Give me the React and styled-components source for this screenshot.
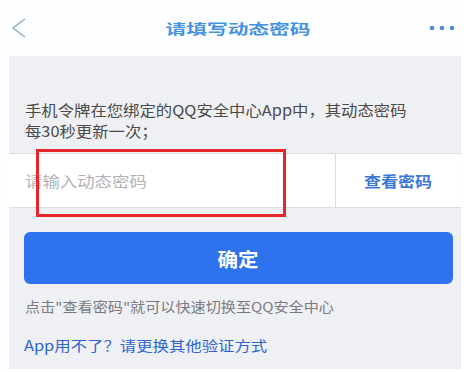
import React from "react";
import styled, { createGlobalStyle } from "styled-components";

const GlobalStyle = createGlobalStyle`
  html, body { margin: 0; padding: 0; background: #fdfeff; }
  body { font-family: "Noto Sans CJK SC", "Noto Sans", sans-serif; }
  * { box-sizing: border-box; }
`;

const Page = styled.div`
  position: relative;
  width: 464px;
  height: 372px;
  display: flex;
  flex-direction: column;
  background: #fdfeff;
  overflow: hidden;
`;

const Header = styled.div`
  height: 56px;
  flex: none;
  display: grid;
  grid-template-columns: 66px 1fr 54px;
  align-items: center;
`;

const BackBtn = styled.div`
  display: flex;
  align-items: center;
  padding-left: 11px;
`;

const MoreBtn = styled.div`
  display: flex;
  justify-content: flex-end;
  padding-right: 9px;
  padding-bottom: 1px;
`;

const Title = styled.div`
  text-align: center;
  font-size: 14px;
  font-weight: 700;
  color: #4392e3;
  line-height: 20px;
`;

const Stretch = styled.span`
  display: inline-block;
  white-space: nowrap;
  transform: scaleX(${(p) => p.$sx || 1});
  transform-origin: ${(p) => p.$origin || "left center"};
`;

const Panel = styled.div`
  flex: 1;
  margin: 0 3px 3px 9px;
  background: #eff0f4;
  display: flex;
  flex-direction: column;
`;

const Desc = styled.div`
  padding: 43px 0 0 16px;
  font-size: 15px;
  line-height: 21px;
  color: #4a4a4a;
`;

const InputRow = styled.div`
  margin-top: 12px;
  height: 55px;
  background: #fff;
  border-top: 1px solid #dcdde2;
  border-bottom: 1px solid #dcdde2;
  display: grid;
  grid-template-columns: 326px 1px 1fr;
  align-items: center;
`;

const Placeholder = styled.div`
  padding-left: 16px;
  font-size: 15px;
  color: #b3b3b8;
`;

const Divider = styled.div`
  align-self: stretch;
  background: #dcdde2;
`;

const ViewLink = styled.div`
  text-align: center;
  font-size: 15px;
  font-weight: 600;
  color: #3b76d9;
`;

const ConfirmButton = styled.div`
  margin: 24px 8px 0 15px;
  height: 52px;
  border-radius: 6px;
  background: #2f72ee;
  display: flex;
  align-items: center;
  justify-content: center;
  color: #fff;
  font-size: 19px;
  font-weight: 700;
`;

const Hint = styled.div`
  margin-top: 12px;
  padding-left: 16px;
  font-size: 13.5px;
  line-height: 20px;
  color: #7a7a80;
`;

const AltLink = styled.div`
  margin-top: 19px;
  padding-left: 15px;
  font-size: 14px;
  line-height: 20px;
  color: #2d66d2;
`;

const Highlight = styled.div`
  position: absolute;
  left: 36px;
  top: 149px;
  width: 250px;
  height: 68px;
  border: 3px solid #e5262a;
  pointer-events: none;
`;

export default function App() {
  return (
    <>
      <GlobalStyle />
      <Page>
        <Header>
          <BackBtn>
            <svg width="16" height="22" viewBox="0 0 16 22">
              <polyline
                points="14,2 2,11 14,20"
                fill="none"
                stroke="#8ea7c9"
                strokeWidth="1.4"
              />
            </svg>
          </BackBtn>
          <Title>
            <Stretch $sx={1.48} $origin="center">请填写动态密码</Stretch>
          </Title>
          <MoreBtn>
            <svg width="26" height="6" viewBox="0 0 26 6">
              <circle cx="3" cy="3" r="2.3" fill="#4d8bd6" />
              <circle cx="13" cy="3" r="2.3" fill="#4d8bd6" />
              <circle cx="23" cy="3" r="2.3" fill="#4d8bd6" />
            </svg>
          </MoreBtn>
        </Header>
        <Panel>
          <Desc>
            <Stretch $sx={1.09}>手机令牌在您绑定的QQ安全中心App中，其动态密码</Stretch>
            <br />
            <Stretch $sx={1.09}>每30秒更新一次；</Stretch>
          </Desc>
          <InputRow>
            <Placeholder>
              <Stretch $sx={1.16}>请输入动态密码</Stretch>
            </Placeholder>
            <Divider />
            <ViewLink>
              <Stretch $sx={1.13} $origin="center">查看密码</Stretch>
            </ViewLink>
          </InputRow>
          <ConfirmButton>
            <Stretch $sx={1.08} $origin="center">确定</Stretch>
          </ConfirmButton>
          <Hint>
            <Stretch $sx={1.12}>点击"查看密码"就可以快速切换至QQ安全中心</Stretch>
          </Hint>
          <AltLink>
            <Stretch $sx={1.17}>App用不了？请更换其他验证方式</Stretch>
          </AltLink>
        </Panel>
        <Highlight />
      </Page>
    </>
  );
}
